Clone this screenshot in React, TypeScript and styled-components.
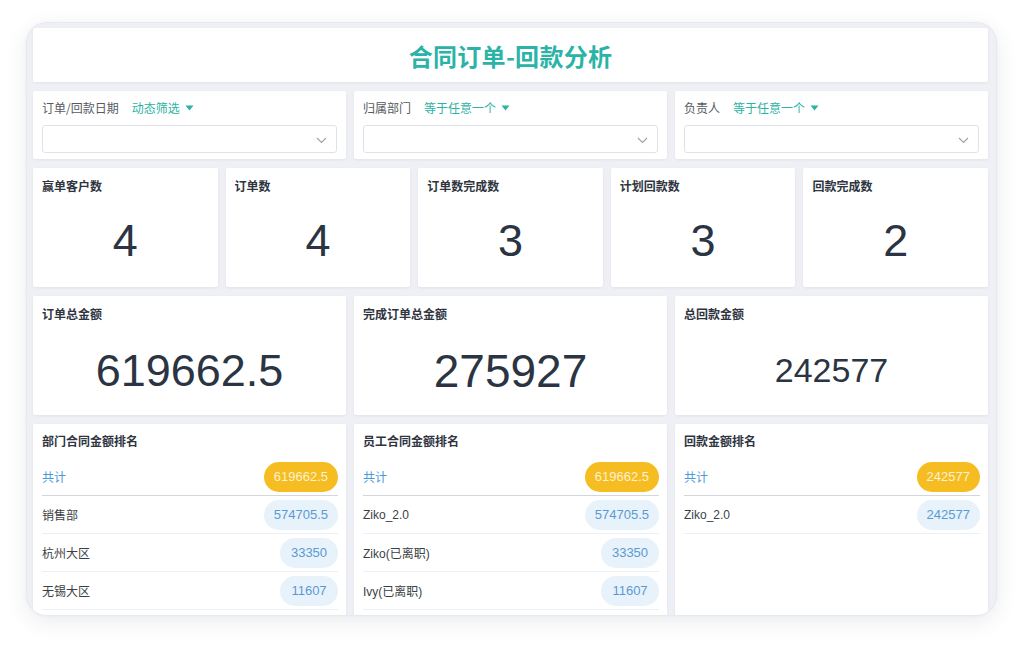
import styled, { createGlobalStyle } from "styled-components";

const GlobalStyle = createGlobalStyle`
  html, body {
    margin: 0;
    padding: 0;
    background: #ffffff;
  }
  body {
    font-family: "Liberation Sans", "Noto Sans CJK SC", sans-serif;
    color: #333;
  }
  * {
    box-sizing: border-box;
  }
`;

type Filter = { label: string; mode: string };
type Kpi = { label: string; value: string };
type Amount = { label: string; value: string; size: number };
type RankRow = { name: string; value: string };
type Ranking = { title: string; total: string; rows: RankRow[] };

const filters: Filter[] = [
  { label: "订单/回款日期", mode: "动态筛选" },
  { label: "归属部门", mode: "等于任意一个" },
  { label: "负责人", mode: "等于任意一个" },
];

const kpis: Kpi[] = [
  { label: "赢单客户数", value: "4" },
  { label: "订单数", value: "4" },
  { label: "订单数完成数", value: "3" },
  { label: "计划回款数", value: "3" },
  { label: "回款完成数", value: "2" },
];

const amounts: Amount[] = [
  { label: "订单总金额", value: "619662.5", size: 45 },
  { label: "完成订单总金额", value: "275927", size: 46 },
  { label: "总回款金额", value: "242577", size: 34 },
];

const rankings: Ranking[] = [
  {
    title: "部门合同金额排名",
    total: "619662.5",
    rows: [
      { name: "销售部", value: "574705.5" },
      { name: "杭州大区", value: "33350" },
      { name: "无锡大区", value: "11607" },
    ],
  },
  {
    title: "员工合同金额排名",
    total: "619662.5",
    rows: [
      { name: "Ziko_2.0", value: "574705.5" },
      { name: "Ziko(已离职)", value: "33350" },
      { name: "Ivy(已离职)", value: "11607" },
    ],
  },
  {
    title: "回款金额排名",
    total: "242577",
    rows: [{ name: "Ziko_2.0", value: "242577" }],
  },
];

const Caret = () => (
  <svg width="9" height="6" viewBox="0 0 9 6">
    <path d="M0.5 0.5 L8.5 0.5 L4.5 5.5 Z" fill="#2bb3a3" />
  </svg>
);

const Chevron = () => (
  <svg width="11" height="7" viewBox="0 0 11 7">
    <path d="M1 1 L5.5 5.5 L10 1" fill="none" stroke="#9aa3ad" strokeWidth="1.1" />
  </svg>
);

const App: React.FunctionComponent = () => {
  return (
    <Page>
      <GlobalStyle />
      <Frame>
        <TitlePanel>
          <Title>合同订单-回款分析</Title>
        </TitlePanel>

        <ThreeCols>
          {filters.map((f) => (
            <FilterPanel key={f.label}>
              <FilterHead>
                <FilterLabel>{f.label}</FilterLabel>
                <FilterMode>
                  {f.mode}
                  <Caret />
                </FilterMode>
              </FilterHead>
              <SelectBox>
                <Chevron />
              </SelectBox>
            </FilterPanel>
          ))}
        </ThreeCols>

        <FiveCols>
          {kpis.map((k) => (
            <StatPanel key={k.label}>
              <PanelLabel>{k.label}</PanelLabel>
              <StatValue $size={45} $shift={0}>
                {k.value}
              </StatValue>
            </StatPanel>
          ))}
        </FiveCols>

        <ThreeCols>
          {amounts.map((a) => (
            <StatPanel key={a.label}>
              <PanelLabel>{a.label}</PanelLabel>
              <StatValue $size={a.size} $shift={4}>
                {a.value}
              </StatValue>
            </StatPanel>
          ))}
        </ThreeCols>

        <ThreeCols>
          {rankings.map((r) => (
            <RankPanel key={r.title}>
              <PanelLabel>{r.title}</PanelLabel>
              <RankList>
                <RankItem $total>
                  <RankName $total>共计</RankName>
                  <Pill $total>{r.total}</Pill>
                </RankItem>
                {r.rows.map((row) => (
                  <RankItem key={row.name}>
                    <RankName>{row.name}</RankName>
                    <Pill>{row.value}</Pill>
                  </RankItem>
                ))}
              </RankList>
            </RankPanel>
          ))}
        </ThreeCols>
      </Frame>
    </Page>
  );
};

const Page = styled.div`
  width: 1024px;
  height: 649px;
  padding: 23px 0 0 27px;
  overflow: hidden;
`;

const Frame = styled.div`
  width: 969px;
  height: 592px;
  padding: 5px 8px 0 6px;
  background: #eef0f5;
  border-radius: 20px;
  box-shadow: 0 0 0 1px #e6e9ef, 0 6px 22px rgba(40, 50, 70, 0.1),
    0 0 4px rgba(40, 50, 70, 0.05);
  overflow: hidden;
  display: flex;
  flex-direction: column;
  gap: 9px;
`;

const Panel = styled.div`
  background: #ffffff;
  border-radius: 2px;
  box-shadow: 0 1px 3px rgba(30, 40, 60, 0.06);
`;

const TitlePanel = styled(Panel)`
  height: 54px;
  flex-shrink: 0;
  display: flex;
  align-items: center;
  justify-content: center;
`;

const Title = styled.h1`
  margin: 0;
  font-family: "Noto Sans CJK SC", sans-serif;
  font-size: 24px;
  font-weight: 700;
  letter-spacing: 0.3px;
  color: #2bb3a7;
`;

const ThreeCols = styled.div`
  display: grid;
  grid-template-columns: repeat(3, 1fr);
  gap: 8px;
  flex-shrink: 0;
`;

const FiveCols = styled.div`
  display: grid;
  grid-template-columns: repeat(5, 1fr);
  gap: 8px;
  flex-shrink: 0;
`;

const FilterPanel = styled(Panel)`
  height: 68px;
  padding: 9px 9px 6px 9px;
  display: flex;
  flex-direction: column;
  gap: 9px;
`;

const FilterHead = styled.div`
  display: flex;
  align-items: center;
  gap: 13px;
  height: 16px;
  font-family: "Noto Sans CJK SC", sans-serif;
  font-size: 12px;
  line-height: 16px;
`;

const FilterLabel = styled.span`
  color: #555b63;
`;

const FilterMode = styled.span`
  display: flex;
  align-items: center;
  gap: 5px;
  color: #2bb3a3;
`;

const SelectBox = styled.div`
  height: 28px;
  border: 1px solid #dfe3e8;
  border-radius: 3px;
  display: flex;
  align-items: center;
  justify-content: flex-end;
  padding-right: 9px;
  padding-top: 2px;
`;

const StatPanel = styled(Panel)`
  height: 119px;
  padding: 10px 9px 0 9px;
  display: flex;
  flex-direction: column;
`;

const PanelLabel = styled.div`
  font-family: "Noto Sans CJK SC", sans-serif;
  font-size: 12px;
  font-weight: 700;
  line-height: 16px;
  color: #2f3540;
`;

const StatValue = styled.div<{ $size: number; $shift: number }>`
  flex: 1;
  display: flex;
  align-items: center;
  justify-content: center;
  padding-top: ${(p) => p.$shift}px;
  font-family: "Liberation Sans", sans-serif;
  font-size: ${(p) => p.$size}px;
  color: #2b3442;
`;

const RankPanel = styled(Panel)`
  height: 200px;
  padding: 9px 8px 0 9px;
`;

const RankList = styled.div`
  margin-top: 9px;
`;

const RankItem = styled.div<{ $total?: boolean }>`
  height: 38px;
  display: flex;
  align-items: center;
  justify-content: space-between;
  border-bottom: 1px solid ${(p) => (p.$total ? "#d3d7dd" : "#eceff3")};
`;

const RankName = styled.span<{ $total?: boolean }>`
  font-family: "Liberation Sans", "Noto Sans CJK SC", sans-serif;
  font-size: 12px;
  color: ${(p) => (p.$total ? "#4a9ad8" : "#3a3f46")};
`;

const Pill = styled.span<{ $total?: boolean }>`
  height: 30px;
  padding: 0 10px;
  border-radius: 15px;
  display: inline-flex;
  align-items: center;
  justify-content: center;
  min-width: 58px;
  font-family: "Liberation Sans", sans-serif;
  font-size: 13px;
  background: ${(p) => (p.$total ? "#f6bd22" : "#e7f2fb")};
  color: ${(p) => (p.$total ? "#fdf1cf" : "#5a9ad3")};
`;

export default App;
